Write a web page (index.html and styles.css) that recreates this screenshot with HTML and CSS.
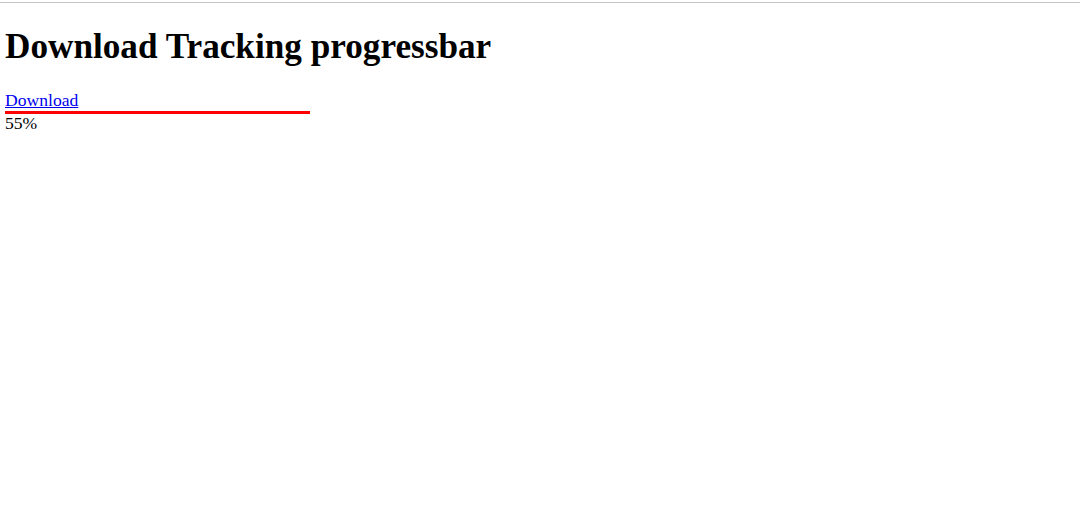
FILE: index.html
```html
<!DOCTYPE html>
<html>
<head>
<meta charset="utf-8">
<link rel="stylesheet" href="styles.css">
</head>
<body>
<div class="topline"></div>
<main class="page">
  <h1 class="title">Download Tracking progressbar</h1>
  <a class="dl-link" href="#">Download</a>
  <div class="bar"></div>
  <div class="pct">55%</div>
</main>
</body>
</html>
```
FILE: styles.css
```css
html, body {
  margin: 0;
  padding: 0;
  background: #fff;
}
body {
  font-family: "Liberation Serif", "Times New Roman", serif;
  font-size: 17.6px;
  color: #000;
}
.topline {
  margin-top: 2px;
  height: 1px;
  background: #c6c6c6;
}
.page {
  padding: 0 5px;
}
.title {
  font-size: 35.2px;
  font-weight: bold;
  margin: 23.6px 0;
}
.dl-link {
  display: block;
  color: #0000ee;
  text-decoration: underline;
  width: max-content;
  line-height: 20px;
}
.bar {
  width: 305px;
  height: 3px;
  margin-top: 1px;
  background: #ff0000;
}
.pct {
  line-height: 20px;
  margin-top: -1px;
}
```
